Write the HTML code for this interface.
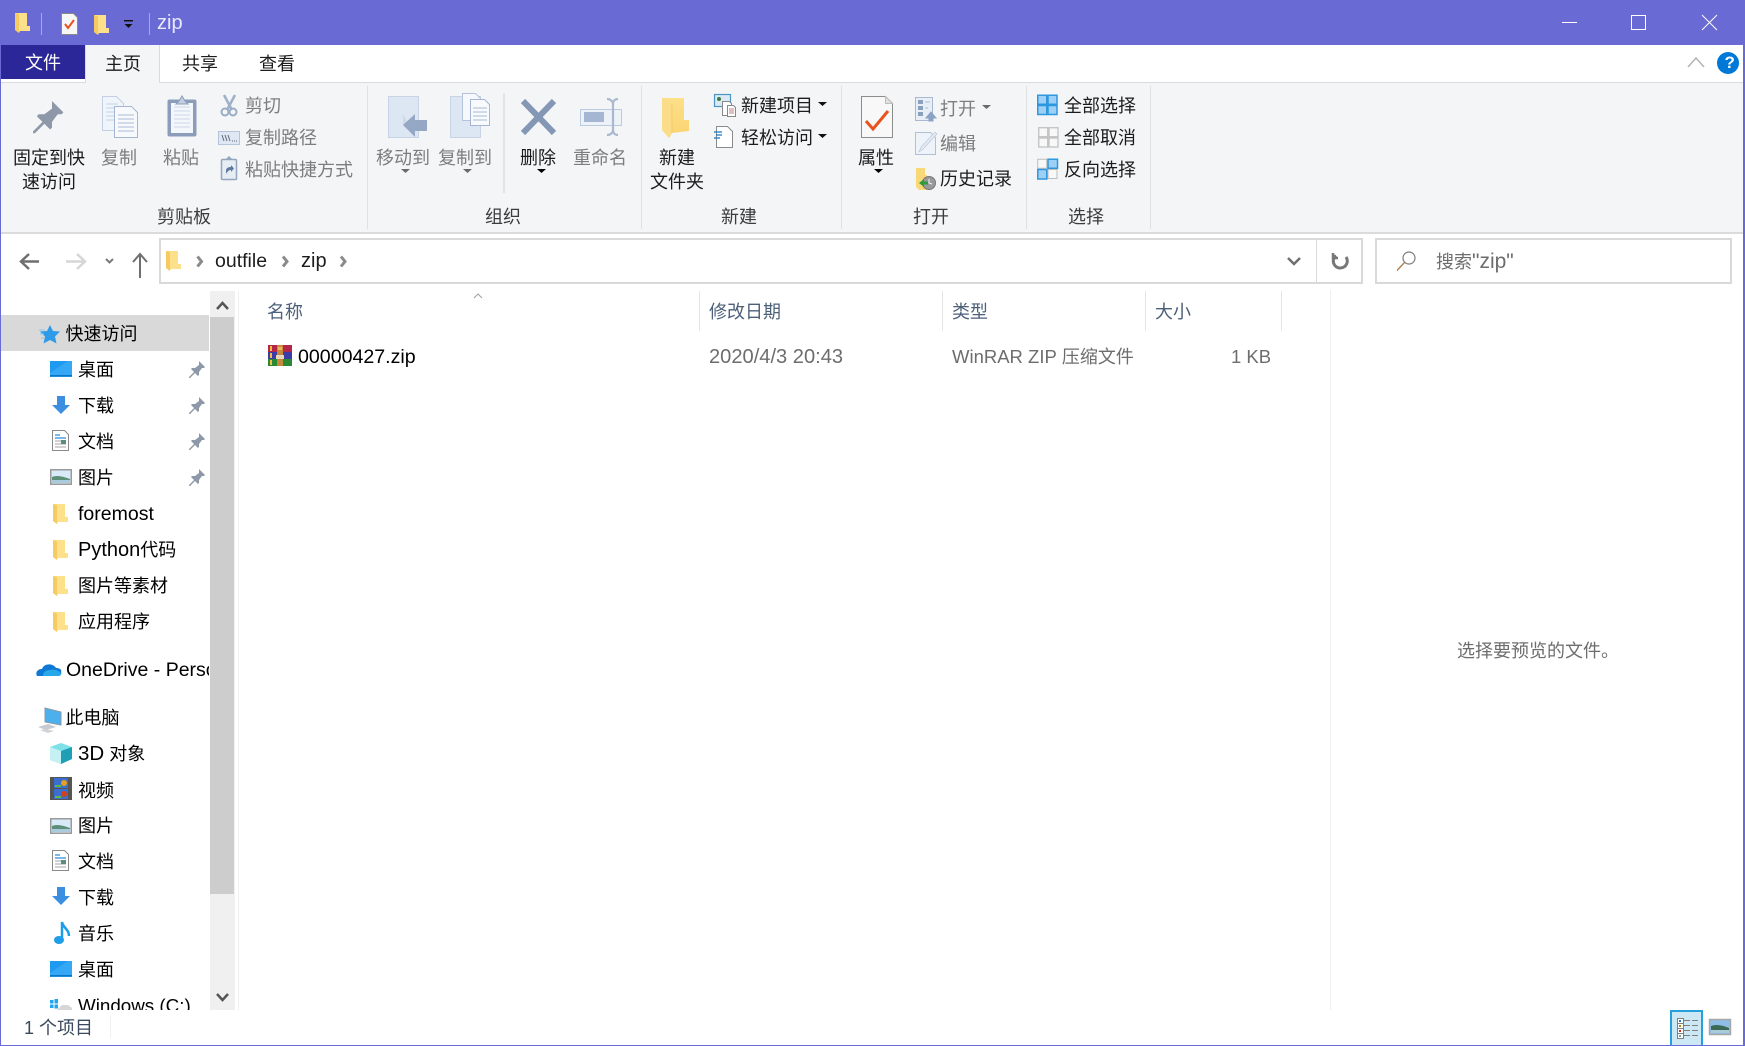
<!DOCTYPE html>
<html lang="zh-CN">
<head>
<meta charset="utf-8">
<title>zip</title>
<style>
html,body{margin:0;padding:0;background:#fff;}
body{width:1745px;height:1046px;position:relative;overflow:hidden;font-family:"Liberation Sans","Noto Sans CJK SC",sans-serif;font-size:18px;color:#000;}
.r{position:absolute;}
.t{position:absolute;white-space:nowrap;height:28px;line-height:28px;}
.g{color:#7d7d7d;}
.d{color:#1c1c1c;}
.h{color:#4c607a;}
.l{color:#6d6d6d;}
.lab{color:#3c3c3c;}
.w{font-size:20px;}
svg{position:absolute;left:0;top:0;}
#clip{position:absolute;left:0;top:290px;width:209px;height:720px;overflow:hidden;}
</style>
</head>
<body>
<!-- frames -->
<div class="r" style="left:0;top:0;width:1745px;height:45px;background:#6a6ad5"></div>
<div class="r" style="left:0;top:45px;width:1px;height:1001px;background:#6a6ad5"></div>
<div class="r" style="left:1743px;top:45px;width:2px;height:1001px;background:#6a6ad5"></div>
<div class="r" style="left:0;top:1045px;width:1745px;height:1px;background:#6a6ad5"></div>
<!-- ribbon -->
<div class="r" style="left:1px;top:83px;width:1742px;height:149px;background:#f4f5f7"></div>
<div class="r" style="left:1px;top:82px;width:1742px;height:1px;background:#dadbdc"></div>
<div class="r" style="left:1px;top:232px;width:1742px;height:2px;background:#dadbdc"></div>
<div class="r" style="left:1px;top:45px;width:84px;height:34px;background:#2b2799"></div>
<div class="r" style="left:85px;top:45px;width:75px;height:38px;background:#f4f5f7;border-left:1px solid #dadbdc;border-right:1px solid #dadbdc;box-sizing:border-box"></div>
<div class="r" style="left:367px;top:86px;width:1px;height:143px;background:#dfe0e2"></div>
<div class="r" style="left:503px;top:93px;width:2px;height:100px;background:#e3e4e6"></div>
<div class="r" style="left:641px;top:86px;width:1px;height:143px;background:#dfe0e2"></div>
<div class="r" style="left:841px;top:86px;width:1px;height:143px;background:#dfe0e2"></div>
<div class="r" style="left:1026px;top:86px;width:1px;height:143px;background:#dfe0e2"></div>
<div class="r" style="left:1150px;top:86px;width:1px;height:143px;background:#dfe0e2"></div>
<!-- address -->
<div class="r" style="left:159px;top:238px;width:1204px;height:46px;border:2px solid #d9d9d9;box-sizing:border-box"></div>
<div class="r" style="left:1316px;top:238px;width:1px;height:46px;background:#d9d9d9"></div>
<div class="r" style="left:1375px;top:238px;width:357px;height:46px;border:2px solid #d9d9d9;box-sizing:border-box"></div>
<!-- sidebar -->
<div class="r" style="left:1px;top:315px;width:208px;height:36px;background:#d9d9d9"></div>
<div class="r" style="left:210px;top:291px;width:25px;height:719px;background:#f0f0f0"></div>
<div class="r" style="left:210px;top:317px;width:24px;height:577px;background:#cdcdcd"></div>
<div class="r" style="left:238px;top:291px;width:1px;height:719px;background:#f0f0f0"></div>
<!-- list lines -->
<div class="r" style="left:699px;top:291px;width:1px;height:40px;background:#e5e5e5"></div>
<div class="r" style="left:942px;top:291px;width:1px;height:40px;background:#e5e5e5"></div>
<div class="r" style="left:1145px;top:291px;width:1px;height:40px;background:#e5e5e5"></div>
<div class="r" style="left:1281px;top:291px;width:1px;height:40px;background:#e5e5e5"></div>
<div class="r" style="left:1330px;top:290px;width:1px;height:720px;background:#f0f0f0"></div>
<div class="r" style="left:110px;top:1016px;width:1px;height:22px;background:#f0f0f0"></div>
<div class="r" style="left:1670px;top:1010px;width:33px;height:35px;background:#cce8f5;border:2px solid #26a0da;border-bottom:0;box-sizing:border-box"></div>

<svg width="1745" height="1046" viewBox="0 0 1745 1046" fill="none">
<defs>
  <linearGradient id="fg" x1="0" y1="0" x2="0" y2="1"><stop offset="0" stop-color="#fde08a"/><stop offset="1" stop-color="#fad36f"/></linearGradient>
  <g id="fo"><path d="M0 1h12v13h3v5H5l-1 2-4-3z" fill="#fde08a"/><path d="M0 1l4 1v19l-4-3z" fill="#f6cc62"/></g>
  <path id="pin" d="M10 0l6 6-1 1-2-0-3 4 0 3-1 1-3-3-5 5H0v-1l5-5-3-3 1-1 3 0 4-3 0-2z" fill="#8d99a8"/>
  <g id="desk"><rect x="0" y="0" width="22" height="16" fill="#1e9bf0"/><path d="M0 16V12L18 0h4v13H22v3z" fill="#35a8f5"/><rect x="0" y="14" width="22" height="1.500" fill="#0a74c9"/></g>
  <path id="down" d="M5 0h8v9h5l-9 9-9-9h5z" fill="#3b8ee0"/>
  <g id="doc"><path d="M.5.500h12l4 4v16H.5z" fill="#fff" stroke="#8a8a8a"/><path d="M3 5h5M3 8h11" stroke="#2a8be0" stroke-width="1.200"/><path d="M3 11h6M3 14h11M3 17h11" stroke="#a5a5a5"/><rect x="9" y="10" width="5" height="4" fill="#5b8f7a"/></g>
  <g id="pic"><rect x=".75" y=".75" width="20.500" height="14.500" fill="#d8e9f8" stroke="#9a9a9a" stroke-width="1.500"/><path d="M2 8c4-2 10-1 18 2v2H2z" fill="#5c8f78"/><path d="M2 11h18v3H2z" fill="#a9cbdc"/></g>
  <path id="chev" d="M0 0l4 5-4 5" stroke="#8a8a8a" stroke-width="3"/>
  <g id="arr"><path d="M0 0h9L4.500 4z"/></g>
  <g id="sel"><rect x=".75" y=".75" width="9" height="9"/><rect x="11" y=".75" width="9" height="9"/><rect x=".75" y="11" width="9" height="9"/><rect x="11" y="11" width="9" height="9"/></g>
</defs>

<!-- Title bar icons -->
<use href="#fo" x="15" y="12"/>
<rect x="41" y="13" width="1" height="22" fill="#a9a9e6"/>
<path d="M61.500 13.500h12l4 4v17h-16z" fill="#f7f7f7" stroke="#8a8a8a"/><path d="M65 24l3 4 6-8" stroke="#e8521b" stroke-width="2"/>
<use href="#fo" x="94" y="14"/>
<rect x="124" y="20" width="9" height="1.500" fill="#111"/><path d="M124.500 24h8l-4 4z" fill="#111"/>
<rect x="149" y="13" width="1" height="22" fill="#a9a9e6"/>
<path d="M1562 22.500h15" stroke="#fff" stroke-width="1"/>
<rect x="1631.500" y="15.500" width="14" height="14" stroke="#fff"/>
<path d="M1702 15l15 15M1717 15l-15 15" stroke="#fff"/>
<path d="M1688 67l8-9 8 9" stroke="#b4b4b4" stroke-width="1.500"/>
<circle cx="1728" cy="63" r="11" fill="#0078d7"/>

<!-- Pin large -->
<g transform="translate(33,101) scale(1.900)"><use href="#pin" fill="#8d99a0"/></g>
<!-- Copy -->
<path d="M102.500 96.500h14l7 7v27h-21z" fill="#f0f4fb" stroke="#c4cfe3"/>
<path d="M106 104h12M106 108h14M106 112h14M106 116h14M106 120h14" stroke="#c5d2e6"/>
<path d="M114.500 106.500h17l6 6v25h-23z" fill="#f7f9fd" stroke="#a6b6d2"/>
<path d="M118 115h16M118 119h16M118 123h16M118 127h16M118 131h16" stroke="#a9bcd8"/>
<!-- Paste -->
<rect x="167.500" y="99.500" width="29" height="37" rx="2" fill="#8b9db9" />
<rect x="171" y="103" width="22" height="30" fill="#f3f6fb"/>
<path d="M174 107h16M174 111h16M174 115h16M174 119h16M174 123h16M174 127h16" stroke="#ccd7e8"/>
<path d="M176 104l3-3h0l3-5 3 5 3 3z" fill="#c3cfe0" stroke="#8b9db9"/>
<!-- Scissors -->
<path d="M224 95l8 15M235 95l-8 15" stroke="#9fb0c9" stroke-width="2.500"/>
<circle cx="225" cy="112" r="3.500" stroke="#9aacc6" stroke-width="2"/><circle cx="233" cy="112" r="3.500" stroke="#9aacc6" stroke-width="2"/>
<!-- Copy path -->
<rect x="218.500" y="131.500" width="21" height="13" fill="#dfe7f2" stroke="#b6c4da"/>
<path d="M222 135l2 6M225 135l2 6M228 135l2 6" stroke="#5d6a80"/><path d="M232 141h6" stroke="#5d6a80" stroke-dasharray="1 1"/>
<!-- Paste shortcut -->
<rect x="221.500" y="159.500" width="15" height="20" rx="1" fill="#e7edf5" stroke="#93a5bf" stroke-width="1.500"/>
<path d="M226 159l3-3 3 3z" fill="#93a5bf"/>
<path d="M226 174v-3c0-3 2-4 5-4v-2l3 3.500-3 3.500v-2c-2 0-3 1-5 4z" fill="#5f7aa0"/>
<!-- Move to -->
<rect x="388.500" y="96.500" width="30" height="41" fill="#dde6f3" stroke="#c7d4e6"/>
<path d="M403 114v10h0l12 13h0z" fill="#cfd9e8"/>
<path d="M403 125l12-11v6h12v11h-12v6z" fill="#94a8c6"/>
<!-- Copy to -->
<rect x="450.500" y="96.500" width="30" height="41" fill="#dde6f3" stroke="#c7d4e6"/>
<path d="M462.500 93.500h13l5 5v22h-18z" fill="#f5f8fc" stroke="#b4c3da"/>
<path d="M470.500 99.500h14l5 5v21h-19z" fill="#f8fafd" stroke="#a6b6d2"/>
<path d="M473 108h14M473 112h14M473 116h14M473 120h14" stroke="#a9bcd8"/>
<!-- Delete -->
<path d="M523 101l31 32M554 101l-31 32" stroke="#8497b5" stroke-width="6"/>
<!-- Rename -->
<rect x="580.500" y="109.500" width="41" height="16" fill="#edf2f9" stroke="#bccae0"/>
<rect x="584" y="112" width="20" height="10" fill="#a4b6d1"/>
<path d="M607 99c3 0 6 2 6 5v26c0 3-3 5-6 5M618 99c-3 0-5 2-5 5M618 135c-3 0-5-2-5-5" stroke="#aab9cf" stroke-width="2.200"/>
<!-- New folder -->
<path d="M662 98H684V120H689V131L672 133 669 138 662 130Z" fill="url(#fg)"/><path d="M662 98l10 6v29l-3 5-7-8z" fill="#fbdc88"/><path d="M672 104V133" stroke="#f3cc6c"/>
<!-- New item -->
<rect x="714.500" y="94.500" width="16" height="12" fill="#dbe9f4" stroke="#4a97c5" stroke-width="1.200"/><circle cx="719" cy="99" r="2" fill="#3f7a3c"/>
<path d="M722.500 101.500h7l2 2v12h-9z" fill="#fff" stroke="#888"/><path d="M727.500 105.500h6l2 2v9h-8z" fill="#fff" stroke="#888"/><path d="M729 109h5M729 111h5M729 113h5" stroke="#c47e80"/>
<!-- Easy access -->
<path d="M716.500 126.500h11l5 5v16h-16z" fill="#fff" stroke="#8a8a8a"/><path d="M714 132h8M716 135h6M714 138h6" stroke="#1976c2" stroke-width="1.200"/>
<use href="#arr" x="818" y="102" fill="#111"/><use href="#arr" x="818" y="134" fill="#111"/>
<!-- arrows under big btns -->
<use href="#arr" x="401" y="169" fill="#6a6a6a"/><use href="#arr" x="463" y="169" fill="#6a6a6a"/><use href="#arr" x="537" y="169" fill="#000"/><use href="#arr" x="874" y="169" fill="#000"/>
<use href="#arr" x="982" y="105" fill="#6a6a6a"/>
<!-- Properties -->
<path d="M861.500 96.500h24l7 7v34h-31z" fill="#f8f8f8" stroke="#8c8c8c"/><path d="M885.500 96.500v7h7z" fill="#e2e2e2" stroke="#bdbdbd"/>
<path d="M866 121l7 8 15-18" stroke="#e8521b" stroke-width="3"/>
<!-- Open -->
<rect x="915.500" y="97.500" width="17" height="23" fill="#e8eef6" stroke="#a8b8d0"/>
<rect x="918" y="100" width="5" height="4" fill="#8aa0bf"/><rect x="918" y="106" width="5" height="4" fill="#8aa0bf"/><rect x="918" y="112" width="5" height="4" fill="#8aa0bf"/>
<path d="M925 102h5M925 108h3" stroke="#b0c0d5"/>
<path d="M926 118l5-6 5 6h-3v3h-4v-3z" fill="#8ba2c4" stroke="#8ba2c4"/>
<!-- Edit -->
<path d="M915.500 132.500h15l5 5v17h-20z" fill="#eef3f9" stroke="#b0c0d6"/>
<path d="M919 152l2-5 14-15 2 2-14 15z" fill="#e3eaf3" stroke="#b5c3d8" stroke-width=".6"/>
<!-- History -->
<path d="M916 168h9v7h2v15h-8l-3-3z" fill="#f9d878"/>
<circle cx="929" cy="183" r="6.500" fill="#9a9a9a" stroke="#777"/><path d="M929 179v4l3 1" stroke="#eee"/>
<path d="M919 183l5-4v2.500h4v3h-4v2.500z" fill="#2d9a3c"/>
<!-- Select -->
<g stroke="#2d97e0" stroke-width="1.500" fill="#9ed0f5" transform="translate(1037,94.500)"><use href="#sel"/></g>
<g stroke="#bdbdbd" stroke-width="1.200" fill="#f8f8f8" transform="translate(1038,127)"><use href="#sel"/></g>
<g transform="translate(1037,158.500)"><rect x=".75" y=".75" width="9" height="9" fill="#f8f8f8" stroke="#bdbdbd"/><rect x="11" y=".75" width="9.500" height="9" fill="#9ed0f5" stroke="#2d97e0" stroke-width="1.500"/><rect x=".75" y="11" width="9" height="9.500" fill="#9ed0f5" stroke="#2d97e0" stroke-width="1.500"/><rect x="11" y="11" width="9" height="9" fill="#f8f8f8" stroke="#bdbdbd"/></g>

<!-- Nav -->
<path d="M39 261.500H22M29 254l-8 7.500 8 7.500" stroke="#6f6f6f" stroke-width="2.500"/>
<path d="M66 261.500h17M77 254l8 7.500-8 7.500" stroke="#d6d6d6" stroke-width="2.500"/>
<path d="M106 259l3.500 3.500 3.500-3.500" stroke="#7a7a7a" stroke-width="2"/>
<path d="M140 278V255M133 262l7-8 7 8" stroke="#6f6f6f" stroke-width="2"/>
<use href="#fo" x="166" y="250"/>
<use href="#chev" x="197.500" y="256.500"/><use href="#chev" x="283" y="256.500"/><use href="#chev" x="341" y="256.500"/>
<path d="M1288 258l6 6 6-6" stroke="#6f6f6f" stroke-width="2.500"/>
<path d="M1346 257a7 7 0 1 1-10-1.500" stroke="#777" stroke-width="3"/><path d="M1333 253v5h5" stroke="#777" stroke-width="2.500"/>
<circle cx="1409" cy="258" r="6" stroke="#7b7b7b" stroke-width="1.200"/><path d="M1404.500 262.500l-7.500 8" stroke="#a97b4e" stroke-width="1.300"/>

<!-- Scroll arrows -->
<path d="M217 309l5.500-6 5.500 6" stroke="#555" stroke-width="2.500"/>
<path d="M217 994l5.500 6 5.500-6" stroke="#555" stroke-width="2.500"/>
<path d="M474 298l4-4 4 4" stroke="#a0a0a0"/>

<!-- Sidebar icons -->
<path d="M50 325l3 6 7 .5-5 5 1.500 7-6.500-3.500-6.500 3.500 1.500-7-5-5 7-.5z" fill="#2f9be8"/><path d="M39 330h6M40 334h4M41 338h3" stroke="#8cc7f0"/>
<use href="#desk" x="50" y="361"/>
<use href="#down" x="52" y="396"/>
<use href="#doc" x="52" y="430"/>
<use href="#pic" x="50" y="469"/>
<use href="#fo" x="53" y="503"/>
<use href="#fo" x="53" y="539"/>
<use href="#fo" x="53" y="575"/>
<use href="#fo" x="53" y="611"/>
<use href="#pin" x="189" y="361"/><use href="#pin" x="189" y="397"/><use href="#pin" x="189" y="433"/><use href="#pin" x="189" y="469"/>
<!-- OneDrive -->
<path d="M37 676c-2-4 1-7 5-7 2-6 11-6 14-1 5 0 6 3 5 4 1 1 0 4-3 4z" fill="#0f78d4"/><path d="M43 676c0-4 3-6 7-6 3-1 10 0 11 4-1 2-2 2-3 2z" fill="#28a8ea"/>
<!-- PC -->
<path d="M45 708l16 4v13l-16-3z" fill="#4cb0ec" stroke="#8a9aaa"/><path d="M38 727l10-3 8 3-10 3z" fill="#c5cbd0"/><path d="M40 730l8 3 6-2-8-2z" fill="#d0d3d6"/>
<!-- 3D -->
<path d="M61 743l11 4v12l-11 5-11-4v-13z" fill="#7fe0e8"/><path d="M61 751l11-4v12l-11 5z" fill="#1e9fb5"/><path d="M50 747l11 4v13l-11-4z" fill="#c5f1f3"/>
<!-- Video -->
<rect x="50" y="777" width="22" height="23" fill="#555"/><rect x="54" y="778" width="14" height="10" fill="#3a6fd0"/><rect x="54" y="789" width="14" height="10" fill="#3a6fd0"/><circle cx="64" cy="783" r="3" fill="#e6a020"/><circle cx="64" cy="794" r="3" fill="#d0421c"/><path d="M55 786h6M55 797h6" stroke="#5fbb46" stroke-width="2"/>
<use href="#pic" x="50" y="818"/>
<use href="#doc" x="52" y="850"/>
<use href="#down" x="52" y="887"/>
<!-- Music -->
<ellipse cx="59" cy="940" rx="5" ry="4" fill="#1e9de8"/><path d="M62 940v-18c1 6 7 7 7 14" stroke="#1e9de8" stroke-width="2.500"/>
<use href="#desk" x="50" y="961"/>
<!-- Windows C clipped -->
<g fill="#22a6f2"><rect x="50" y="1000" width="3.500" height="3.500"/><rect x="54.500" y="999" width="3.500" height="4.500"/><rect x="50" y="1004.500" width="3.500" height="3.500"/><rect x="54.500" y="1004.500" width="3.500" height="4"/></g>
<path d="M57 1010l5-5h6l4 3v2z" fill="#d6d6d6"/>

<!-- RAR -->
<g>
<rect x="268" y="345" width="24" height="7" fill="#b32648"/><rect x="268" y="352" width="24" height="7" fill="#3c3ca6"/><rect x="268" y="359" width="24" height="7" fill="#2a8a34"/>
<rect x="270" y="346" width="2" height="5" fill="#f0c040"/><rect x="270" y="353" width="2" height="5" fill="#f0c040"/><rect x="270" y="360" width="2" height="5" fill="#f0c040"/>
<rect x="277" y="345" width="6" height="21" fill="#c68a3c"/><rect x="276" y="355" width="8" height="4" fill="#e8d8b8"/><rect x="278" y="347" width="4" height="3" fill="#e9b95a"/>
</g>

<!-- view icons -->
<g stroke="#7f7f7f"><rect x="1677.500" y="1018.500" width="6" height="5" fill="#fff"/><rect x="1677.500" y="1023.500" width="6" height="5" fill="#fff"/><rect x="1677.500" y="1028.500" width="6" height="5" fill="#fff"/><rect x="1677.500" y="1033.500" width="6" height="5" fill="#fff"/>
<path d="M1684 1020.500h6M1692 1020.500h6M1684 1025.500h6M1692 1025.500h6M1684 1030.500h6M1692 1030.500h6M1684 1035.500h6M1692 1035.500h6"/></g>
<rect x="1679" y="1020" width="2" height="2" fill="#2a7ac8"/><rect x="1679" y="1025" width="2" height="2" fill="#a08a20"/><rect x="1679" y="1030" width="2" height="2" fill="#c8302a"/><rect x="1679" y="1035" width="2" height="2" fill="#78a090"/>
<rect x="1709.500" y="1019.500" width="21" height="15" fill="#8ebee8" stroke="#a8a8a8" stroke-width="1.500"/><path d="M1711 1026c5-2 11-1 18 2v2h-18z" fill="#3a6a55"/><path d="M1711 1030h18v3h-18z" fill="#a9cbdc"/>
</svg>

<!-- Text: title & tabs -->
<div class="t" style="left:157px;top:9px;font-size:20px;color:#e9e9fb">zip</div>
<div class="t" style="left:1724.500px;top:49px;color:#fff;font-weight:bold;font-size:17px">?</div>
<div class="t" style="left:25px;top:49px;color:#fff">文件</div>
<div class="t d" style="left:105px;top:50px">主页</div>
<div class="t d" style="left:182px;top:50px">共享</div>
<div class="t d" style="left:259px;top:50px">查看</div>

<!-- Ribbon text -->
<div class="t d" style="left:13px;top:144px">固定到快</div>
<div class="t d" style="left:22px;top:168px">速访问</div>
<div class="t g" style="left:101px;top:144px">复制</div>
<div class="t g" style="left:163px;top:144px">粘贴</div>
<div class="t g" style="left:245px;top:92px">剪切</div>
<div class="t g" style="left:245px;top:124px">复制路径</div>
<div class="t g" style="left:245px;top:156px">粘贴快捷方式</div>
<div class="t lab" style="left:157px;top:203px">剪贴板</div>
<div class="t g" style="left:376px;top:144px">移动到</div>
<div class="t g" style="left:438px;top:144px">复制到</div>
<div class="t d" style="left:520px;top:144px">删除</div>
<div class="t g" style="left:573px;top:144px">重命名</div>
<div class="t lab" style="left:485px;top:203px">组织</div>
<div class="t d" style="left:659px;top:144px">新建</div>
<div class="t d" style="left:650px;top:168px">文件夹</div>
<div class="t d" style="left:741px;top:92px">新建项目</div>
<div class="t d" style="left:741px;top:124px">轻松访问</div>
<div class="t lab" style="left:721px;top:203px">新建</div>
<div class="t d" style="left:858px;top:144px">属性</div>
<div class="t g" style="left:940px;top:95px">打开</div>
<div class="t g" style="left:940px;top:130px">编辑</div>
<div class="t d" style="left:940px;top:165px">历史记录</div>
<div class="t lab" style="left:913px;top:203px">打开</div>
<div class="t d" style="left:1064px;top:92px">全部选择</div>
<div class="t d" style="left:1064px;top:124px">全部取消</div>
<div class="t d" style="left:1064px;top:156px">反向选择</div>
<div class="t lab" style="left:1068px;top:203px">选择</div>

<!-- Address -->
<div class="t d" style="left:215px;top:247px;font-size:19.500px">outfile</div>
<div class="t d" style="left:301px;top:247px;font-size:20px">zip</div>
<div class="t l" style="left:1436px;top:248px">搜索<span class="w" style="font-size:21px">"zip"</span></div>

<!-- Sidebar text -->
<div id="clip">
<div class="t" style="left:65.500px;top:30px">快速访问</div>
<div class="t" style="left:78px;top:66px">桌面</div>
<div class="t" style="left:78px;top:102px">下载</div>
<div class="t" style="left:78px;top:138px">文档</div>
<div class="t" style="left:78px;top:174px">图片</div>
<div class="t" style="left:78px;top:210px;font-size:19.500px">foremost</div>
<div class="t" style="left:78px;top:246px"><span style="font-size:20px">Python</span>代码</div>
<div class="t" style="left:78px;top:282px">图片等素材</div>
<div class="t" style="left:78px;top:318px">应用程序</div>
<div class="t" style="left:66px;top:366px;font-size:19.500px">OneDrive - Personal</div>
<div class="t" style="left:65.500px;top:414px">此电脑</div>
<div class="t" style="left:78px;top:450px"><span style="font-size:20.500px">3D</span> 对象</div>
<div class="t" style="left:78px;top:487px">视频</div>
<div class="t" style="left:78px;top:522px">图片</div>
<div class="t" style="left:78px;top:558px">文档</div>
<div class="t" style="left:78px;top:594px">下载</div>
<div class="t" style="left:78px;top:630px">音乐</div>
<div class="t" style="left:78px;top:666px">桌面</div>
<div class="t" style="left:78px;top:702px;font-size:18.800px">Windows (C:)</div>
</div>

<!-- List text -->
<div class="t h" style="left:267px;top:298px">名称</div>
<div class="t h" style="left:709px;top:298px">修改日期</div>
<div class="t h" style="left:952px;top:298px">类型</div>
<div class="t h" style="left:1155px;top:298px">大小</div>
<div class="t" style="left:298px;top:343px;font-size:19.600px">00000427.zip</div>
<div class="t l" style="left:709px;top:343px;font-size:20.100px">2020/4/3 20:43</div>
<div class="t l" style="left:952px;top:343px"><span style="font-size:18.500px">WinRAR ZIP</span> 压缩文件</div>
<div class="t l" style="left:1231px;top:343px;font-size:18.500px">1 KB</div>
<div class="t l" style="left:1457px;top:637px;font-size:18px">选择要预览的文件。</div>
<div class="t" style="left:24px;top:1014px;color:#3a4a5c">1 个项目</div>
</body>
</html>
